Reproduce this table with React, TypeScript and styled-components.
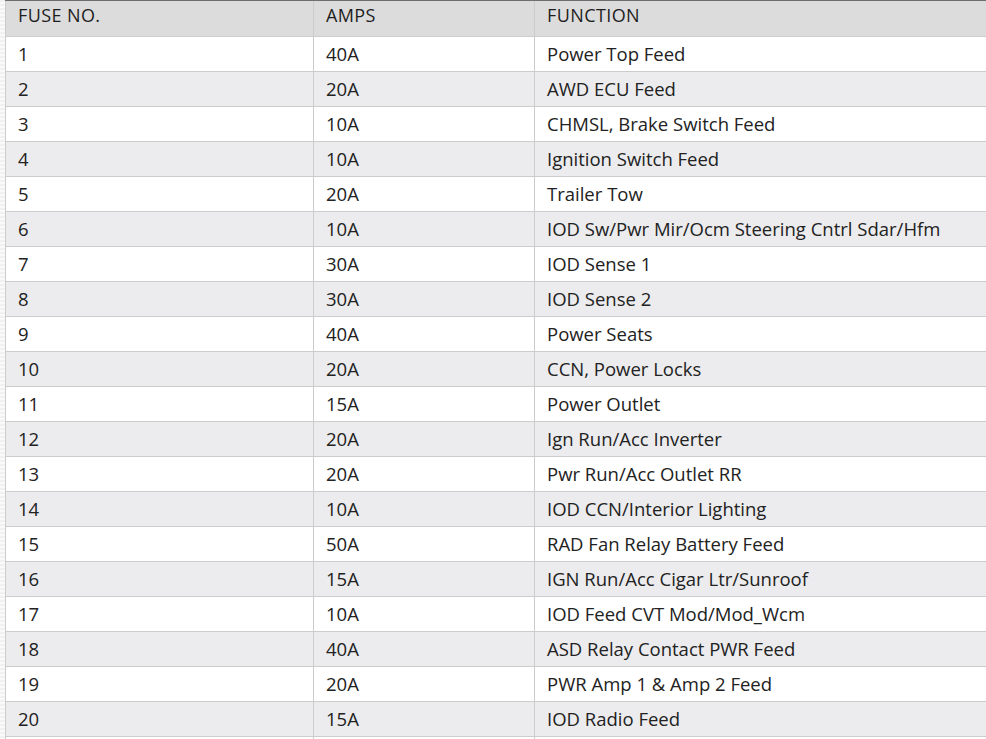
import React from "react";
import styled, { createGlobalStyle } from "styled-components";

const Global = createGlobalStyle`
  html, body { margin: 0; padding: 0; background: #ffffff; overflow: hidden; }
  body { font-family: "Open Sans", "Noto Sans", sans-serif; }
`;

const Page = styled.div`
  display: flex;
  width: 986px;
  height: 739px;
  overflow: hidden;
`;

const Gutter = styled.div`
  flex: 0 0 5px;
  background: repeating-linear-gradient(
    to bottom,
    #f1f1f1 0px,
    #f1f1f1 2px,
    #fafafa 2px,
    #fafafa 4px
  );
`;

const Scroller = styled.div`
  flex: 1 1 auto;
  overflow: hidden;
  border-top: 1px solid #6e6e6e;
`;

const Table = styled.table`
  border-collapse: collapse;
  table-layout: fixed;
  width: 1000px;
  color: #222222;
  font-size: 18.5px;
`;

const HeadCell = styled.th<{ w: number }>`
  width: ${(p) => p.w}px;
  box-sizing: border-box;
  background: #dcdcdc;
  border: 1px solid #cccccc;
  border-top: none;
  text-align: left;
  font-weight: 400;
  font-size: 18px;
  letter-spacing: 0.4px;
  color: #1e1e1e;
  height: 35px;
  padding: 0 12px 6px;
  line-height: 29px;
  vertical-align: middle;
`;

const Row = styled.tr<{ even: boolean }>`
  background: ${(p) => (p.even ? "#ececee" : "#ffffff")};
`;

const Cell = styled.td`
  border: 1px solid #cccccc;
  height: 34px;
  padding: 0 12px;
  line-height: 34px;
  white-space: nowrap;
  overflow: hidden;
`;

const rows: [string, string, string][] = [
  ["1", "40A", "Power Top Feed"],
  ["2", "20A", "AWD ECU Feed"],
  ["3", "10A", "CHMSL, Brake Switch Feed"],
  ["4", "10A", "Ignition Switch Feed"],
  ["5", "20A", "Trailer Tow"],
  ["6", "10A", "IOD Sw/Pwr Mir/Ocm Steering Cntrl Sdar/Hfm"],
  ["7", "30A", "IOD Sense 1"],
  ["8", "30A", "IOD Sense 2"],
  ["9", "40A", "Power Seats"],
  ["10", "20A", "CCN, Power Locks"],
  ["11", "15A", "Power Outlet"],
  ["12", "20A", "Ign Run/Acc Inverter"],
  ["13", "20A", "Pwr Run/Acc Outlet RR"],
  ["14", "10A", "IOD CCN/Interior Lighting"],
  ["15", "50A", "RAD Fan Relay Battery Feed"],
  ["16", "15A", "IGN Run/Acc Cigar Ltr/Sunroof"],
  ["17", "10A", "IOD Feed CVT Mod/Mod_Wcm"],
  ["18", "40A", "ASD Relay Contact PWR Feed"],
  ["19", "20A", "PWR Amp 1 & Amp 2 Feed"],
  ["20", "15A", "IOD Radio Feed"],
  ["", "", ""],
];

export default function App() {
  return (
    <>
      <Global />
      <Page>
        <Gutter />
        <Scroller>
          <Table>
            <thead>
              <tr>
                <HeadCell w={308}>FUSE NO.</HeadCell>
                <HeadCell w={221}>AMPS</HeadCell>
                <HeadCell w={471}>FUNCTION</HeadCell>
              </tr>
            </thead>
            <tbody>
              {rows.map((r, i) => (
                <Row key={i} even={i % 2 === 1}>
                  <Cell>{r[0]}</Cell>
                  <Cell>{r[1]}</Cell>
                  <Cell>{r[2]}</Cell>
                </Row>
              ))}
            </tbody>
          </Table>
        </Scroller>
      </Page>
    </>
  );
}
